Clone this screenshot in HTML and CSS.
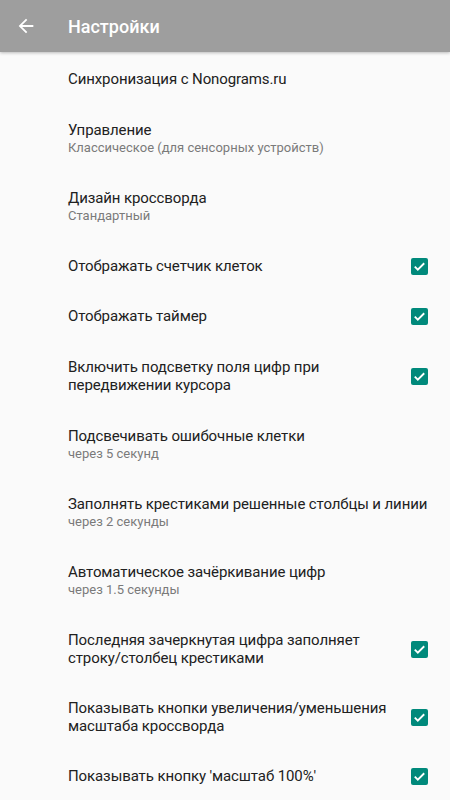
FILE: index.html
```html
<!DOCTYPE html>
<html lang="ru">
<head>
<meta charset="utf-8">
<link rel="stylesheet" href="styles.css">
</head>
<body>
<header class="appbar">
  <svg class="back" viewBox="0 0 24 24" width="22" height="22"><path d="M20 11H7.83l5.59-5.59L12 4l-8 8 8 8 1.41-1.41L7.83 13H20v-2z" fill="#fff"/></svg>
  <h1 class="title">Настройки</h1>
</header>
<main class="list">
  <div class="item single first"><div class="text"><div class="t">Синхронизация с Nonograms.ru</div></div></div>
  <div class="item"><div class="text"><div class="t">Управление</div><div class="s">Классическое (для сенсорных устройств)</div></div></div>
  <div class="item"><div class="text"><div class="t">Дизайн кроссворда</div><div class="s">Стандартный</div></div></div>
  <div class="item single"><div class="text"><div class="t">Отображать счетчик клеток</div></div><span class="cb"><svg viewBox="0 0 18 18"><path d="M4 9.2l3.2 3.1L14 5.6" fill="none" stroke="#fff" stroke-width="2"/></svg></span></div>
  <div class="item single"><div class="text"><div class="t">Отображать таймер</div></div><span class="cb"><svg viewBox="0 0 18 18"><path d="M4 9.2l3.2 3.1L14 5.6" fill="none" stroke="#fff" stroke-width="2"/></svg></span></div>
  <div class="item tall"><div class="text"><div class="t">Включить подсветку поля цифр при передвижении курсора</div></div><span class="cb"><svg viewBox="0 0 18 18"><path d="M4 9.2l3.2 3.1L14 5.6" fill="none" stroke="#fff" stroke-width="2"/></svg></span></div>
  <div class="item"><div class="text"><div class="t">Подсвечивать ошибочные клетки</div><div class="s">через 5 секунд</div></div></div>
  <div class="item"><div class="text"><div class="t">Заполнять крестиками решенные столбцы и линии</div><div class="s">через 2 секунды</div></div></div>
  <div class="item"><div class="text"><div class="t">Автоматическое зачёркивание цифр</div><div class="s">через 1.5 секунды</div></div></div>
  <div class="item"><div class="text"><div class="t">Последняя зачеркнутая цифра заполняет строку/столбец крестиками</div></div><span class="cb"><svg viewBox="0 0 18 18"><path d="M4 9.2l3.2 3.1L14 5.6" fill="none" stroke="#fff" stroke-width="2"/></svg></span></div>
  <div class="item"><div class="text"><div class="t">Показывать кнопки увеличения/уменьшения масштаба кроссворда</div></div><span class="cb"><svg viewBox="0 0 18 18"><path d="M4 9.2l3.2 3.1L14 5.6" fill="none" stroke="#fff" stroke-width="2"/></svg></span></div>
  <div class="item single"><div class="text"><div class="t">Показывать кнопку 'масштаб 100%'</div></div><span class="cb"><svg viewBox="0 0 18 18"><path d="M4 9.2l3.2 3.1L14 5.6" fill="none" stroke="#fff" stroke-width="2"/></svg></span></div>
</main>
</body>
</html>
```
FILE: styles.css
```css
html, body {
  margin: 0;
  padding: 0;
  background: #fafafa;
  font-family: Roboto, "Noto Sans", sans-serif;
  height: 800px;
  overflow: hidden;
}
.appbar {
  height: 52px;
  background: #9e9e9e;
  display: flex;
  align-items: center;
  box-shadow: 0 1px 3px rgba(0,0,0,0.25);
  position: relative;
}
.back {
  margin-left: 15px;
  margin-right: 31px;
  display: block;
}
.title {
  margin: 0;
  font-size: 18px;
  font-weight: 500;
  color: #fff;
}
.list {
  display: flex;
  flex-direction: column;
  padding-top: 1px;
}
.item {
  display: flex;
  align-items: center;
  padding: 15.5px 6px 15.5px 68px;
  min-height: 37px;
}
.item.single {
  min-height: 19px;
}
.item.first {
  min-height: 21px;
}
.item.tall {
  min-height: 39px;
}
.text {
  flex: 1;
  min-width: 0;
}
.t {
  font-size: 15px;
  line-height: 18.5px;
  letter-spacing: -0.1px;
  color: #212121;
}
.s {
  font-size: 13px;
  line-height: 18.5px;
  color: #7a7a7a;
}
.cb {
  width: 17px;
  height: 17px;
  background: #00897b;
  border-radius: 2px;
  flex: none;
  margin-left: 8px;
  margin-right: 16px;
  display: flex;
}
.cb svg {
  width: 17px;
  height: 17px;
}
```
